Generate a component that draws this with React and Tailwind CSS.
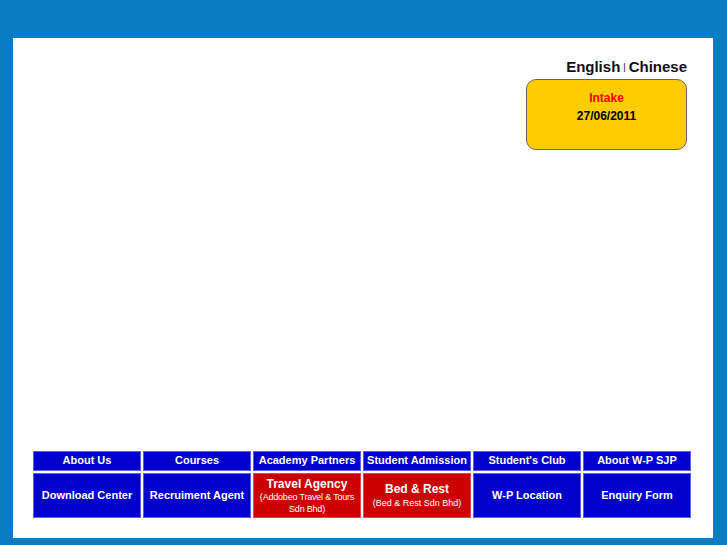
const topRow = ["About Us", "Courses", "Academy Partners", "Student Admission", "Student's Club", "About W-P SJP"];

const Cell = ({ red, children }) => (
  <div
    className={
      "flex flex-col items-center justify-center text-center text-white font-bold leading-tight border " +
      (red ? "bg-[#cc0000] border-[#d84c4c]" : "bg-[#0000cc] border-[#5c5cf0]")
    }
  >
    {children}
  </div>
);

const App = () => {
  return (
    <div
      className="min-h-screen w-full bg-[#0a7dc2] pt-[38px] pl-[13px]"
      style={{ fontFamily: '"Liberation Sans", Arial, sans-serif' }}
    >
      <div className="w-[700px] h-[500px] bg-white flex flex-col">
        <div className="flex flex-col items-end pr-[26px] pt-[20px]">
          <div className="flex items-center text-[15px] font-bold text-[#111] leading-[18px]">
            <span>English</span>
            <span className="text-[9px] font-normal mx-[3px] text-black">|</span>
            <span>Chinese</span>
          </div>
          <div className="mt-[3px] w-[161px] h-[71px] bg-[#ffcc00] border border-[#666] rounded-[10px] flex flex-col items-center pt-[9px] text-[12px] font-bold leading-[18px]">
            <span className="text-[#ff0000]">Intake</span>
            <span className="text-black">27/06/2011</span>
          </div>
        </div>

        <div className="flex-1" />

        <div className="pl-[20px] pb-[20px]">
          <div className="grid grid-cols-[repeat(6,108px)] grid-rows-[20px_45px] gap-[2px]">
            {topRow.map((t) => (
              <Cell key={t}>
                <span className="text-[11px]">{t}</span>
              </Cell>
            ))}
            <Cell>
              <span className="text-[11px]">Download Center</span>
            </Cell>
            <Cell>
              <span className="text-[11px]">Recruiment Agent</span>
            </Cell>
            <Cell red>
              <span className="text-[12px] leading-[14px]">Travel Agency</span>
              <span className="text-[9px] font-normal leading-[12px] tracking-[-0.2px]">
                (Addobeo Travel &amp; Tours Sdn Bhd)
              </span>
            </Cell>
            <Cell red>
              <span className="text-[12px] leading-[15px]">Bed &amp; Rest</span>
              <span className="text-[9px] font-normal leading-[12px]">(Bed &amp; Rest Sdn Bhd)</span>
            </Cell>
            <Cell>
              <span className="text-[11px]">W-P Location</span>
            </Cell>
            <Cell>
              <span className="text-[11px]">Enquiry Form</span>
            </Cell>
          </div>
        </div>
      </div>
    </div>
  );
};

export default App;
